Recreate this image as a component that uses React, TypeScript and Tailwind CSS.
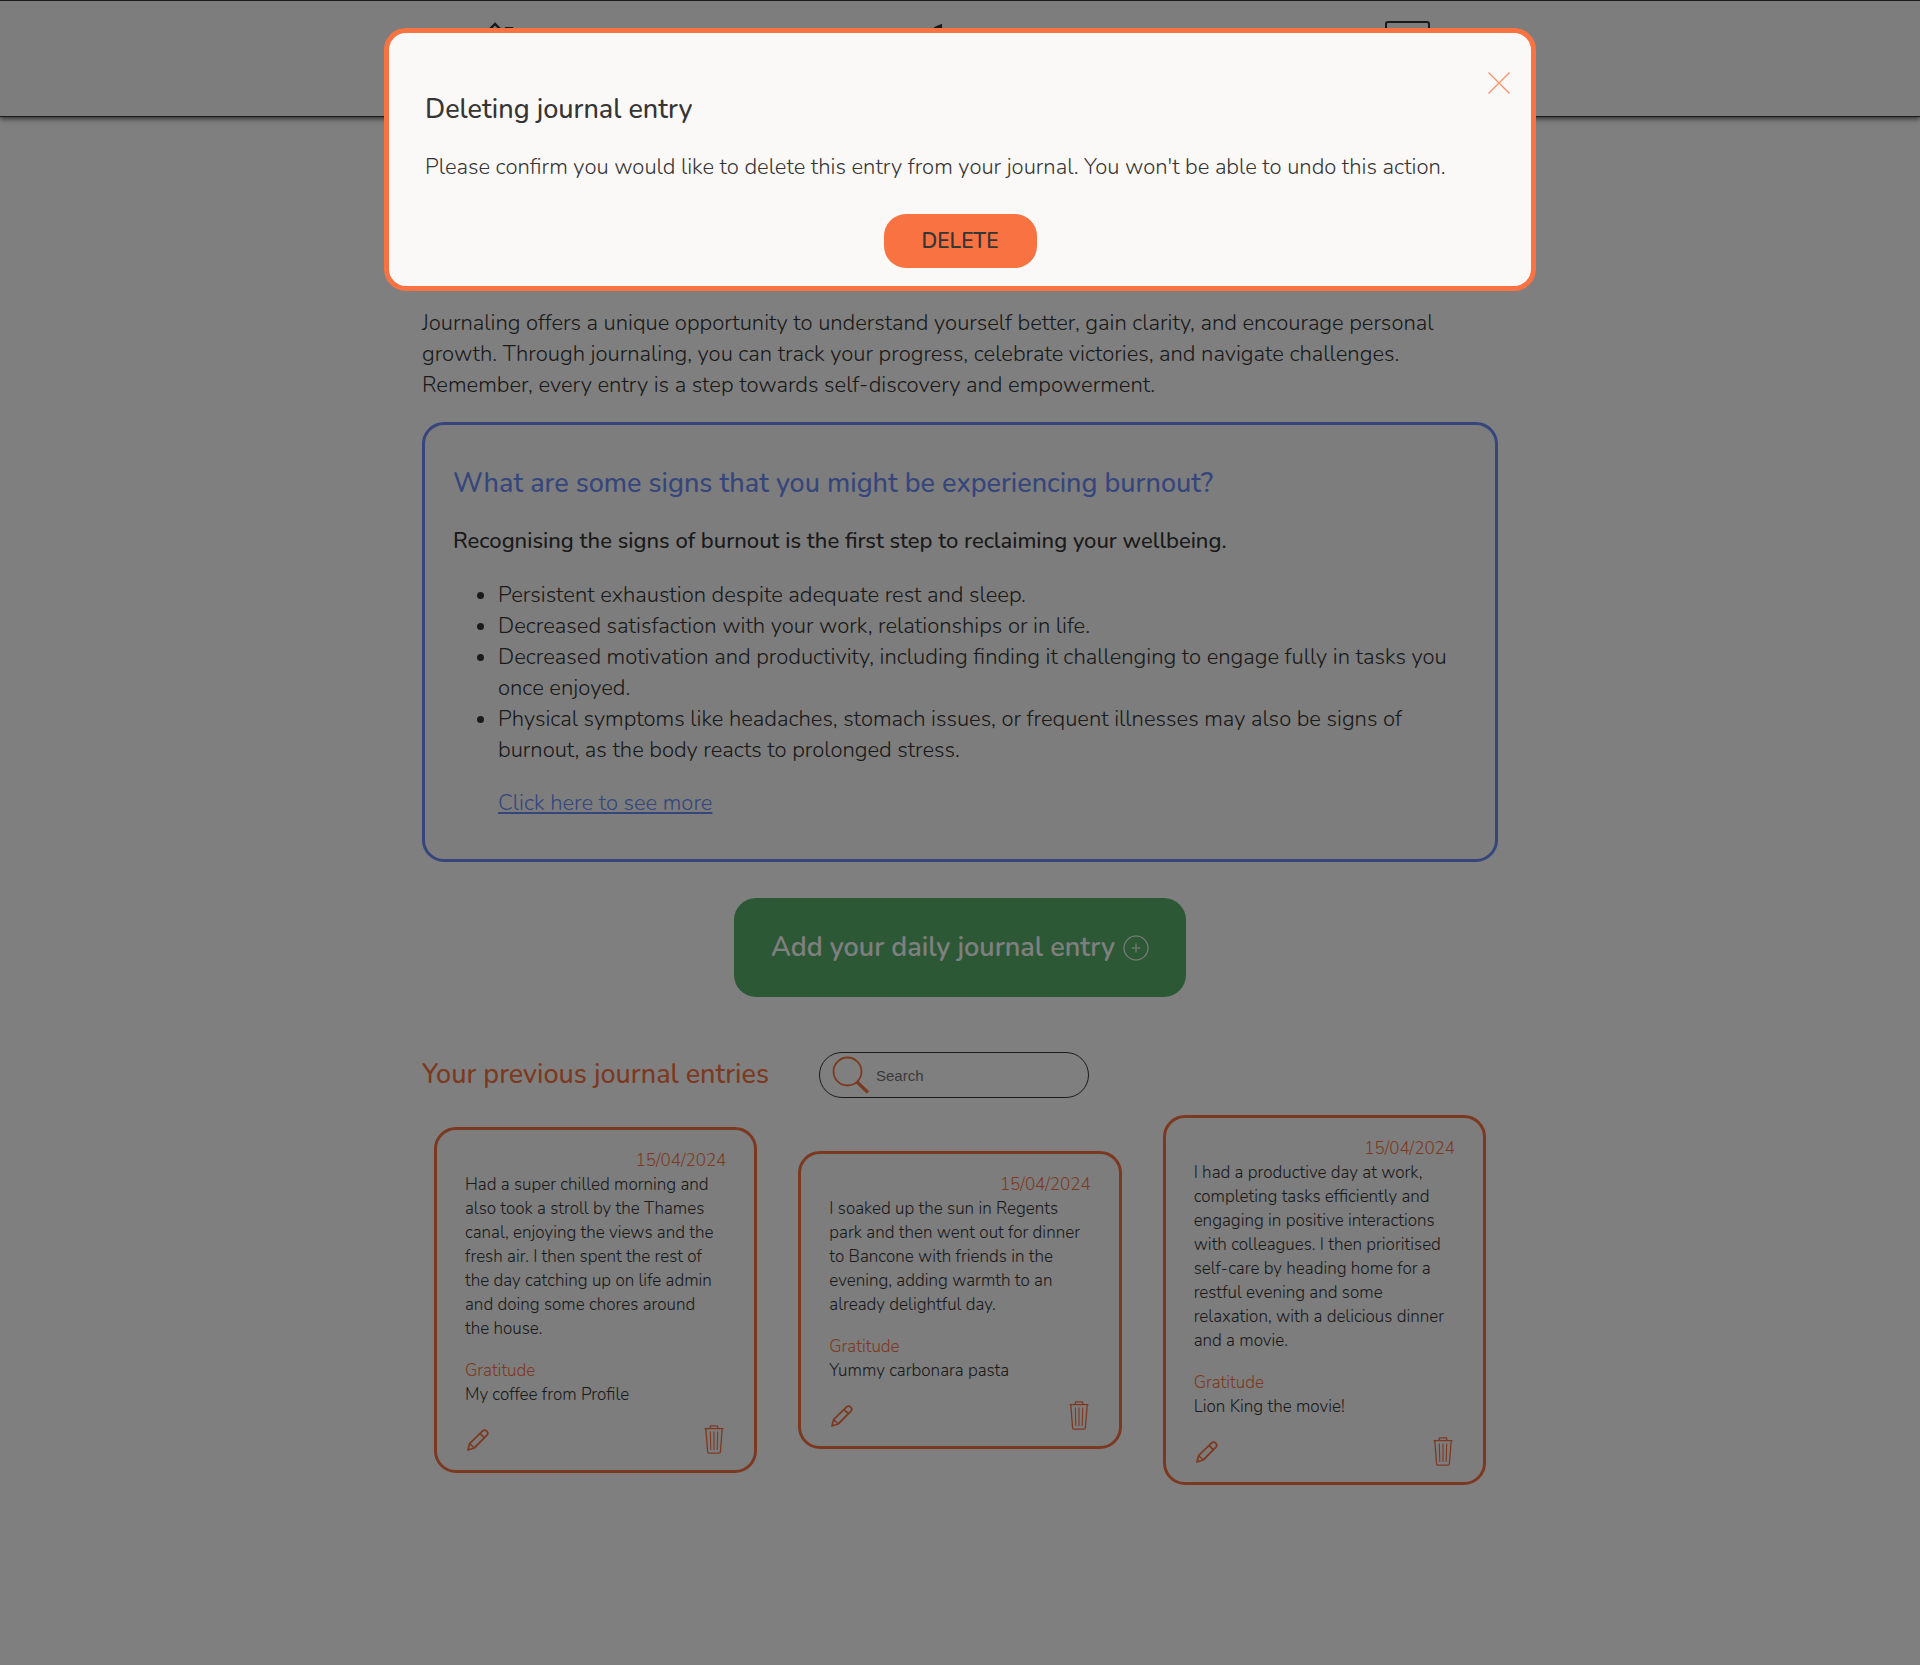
import React from "react";

type Entry = { id: number; date: string; text: string; gratitude: string };

const entries: Entry[] = [
  {
    id: 1,
    date: "15/04/2024",
    text: "Had a super chilled morning and also took a stroll by the Thames canal, enjoying the views and the fresh air. I then spent the rest of the day catching up on life admin and doing some chores around the house.",
    gratitude: "My coffee from Profile",
  },
  {
    id: 2,
    date: "15/04/2024",
    text: "I soaked up the sun in Regents park and then went out for dinner to Bancone with friends in the evening, adding warmth to an already delightful day.",
    gratitude: "Yummy carbonara pasta",
  },
  {
    id: 3,
    date: "15/04/2024",
    text: "I had a productive day at work, completing tasks efficiently and engaging in positive interactions with colleagues. I then prioritised self-care by heading home for a restful evening and some relaxation, with a delicious dinner and a movie.",
    gratitude: "Lion King the movie!",
  },
];

const signs = [
  "Persistent exhaustion despite adequate rest and sleep.",
  "Decreased satisfaction with your work, relationships or in life.",
  "Decreased motivation and productivity, including finding it challenging to engage fully in tasks you once enjoyed.",
  "Physical symptoms like headaches, stomach issues, or frequent illnesses may also be signs of burnout, as the body reacts to prolonged stress.",
];

function HomeIcon() {
  return (
    <svg viewBox="0 0 50 50" className="size-[50px]" fill="none" stroke="currentColor" strokeWidth="2.4">
      <path d="M3 26 L24 5 L45 26" />
      <path d="M9 21 V46 H39 V21" />
      <path d="M35 15 V9.2 H41 V21" />
    </svg>
  );
}

function QuillIcon() {
  return (
    <svg viewBox="0 0 50 50" className="size-[50px]" fill="currentColor">
      <path d="M15 5 C10 6 5 9 2 14 V44 H5 V28 C11 22 16 13 15 5 Z" />
    </svg>
  );
}

function BoardIcon() {
  return (
    <svg viewBox="0 0 50 50" className="size-[50px]" fill="none" stroke="currentColor" strokeWidth="2">
      <rect x="3" y="3" width="43" height="42" rx="2" />
      <path d="M3 14 H46" />
    </svg>
  );
}

function PencilIcon() {
  return (
    <svg viewBox="0 0 22 22" className="size-[22px]" fill="none" stroke="currentColor" strokeWidth="1.8" strokeLinejoin="round">
      <path d="M1 21 L2.6 14.6 L15.4 2.2 A2.9 2.9 0 0 1 19.8 6.4 L7.2 19 Z" />
      <path d="M13.2 4.6 L17.4 8.8" />
      <path d="M2.8 14.8 L7 18.8" strokeWidth="1.5" />
    </svg>
  );
}

function TrashIcon() {
  return (
    <svg viewBox="0 0 20 29" className="h-[29px] w-5" fill="none" stroke="currentColor" strokeWidth="1.3" strokeLinejoin="round">
      <path d="M0.5 3.6 H19.5" />
      <path d="M6.3 3.4 V1.6 Q6.3 0.8 7.1 0.8 H12.9 Q13.7 0.8 13.7 1.6 V3.4" />
      <path d="M1.8 3.8 L3.6 26.8 Q3.7 28.2 5 28.2 H15 Q16.3 28.2 16.4 26.8 L18.2 3.8" />
      <path d="M6.3 6.5 L6.8 25 M10 6.5 V25 M13.7 6.5 L13.2 25" strokeWidth="1.1" />
    </svg>
  );
}

function SearchIcon() {
  return (
    <svg viewBox="0 0 38 38" className="size-[38px] shrink-0 text-[#f97342]" fill="none" stroke="currentColor">
      <circle cx="15.5" cy="15.5" r="14" strokeWidth="1.8" />
      <path d="M25 26 L36 36.5" strokeWidth="3.2" />
    </svg>
  );
}

function PlusCircleIcon() {
  return (
    <svg viewBox="0 0 26 26" className="size-[26px]" fill="none" stroke="currentColor" strokeWidth="1.1" aria-hidden="true">
      <circle cx="13" cy="13" r="12" />
      <path d="M13 8.5 V17.5 M8.5 13 H17.5" />
    </svg>
  );
}

function EntryCard({ entry }: { entry: Entry }) {
  return (
    <article className="rounded-[22px] border-[3px] border-[#f97342] bg-[#fafafa] px-7 pt-[19px] pb-4 text-[17px] leading-6">
      <p className="text-right text-[#f97342]">{entry.date}</p>
      <p className="pr-1.5">{entry.text}</p>
      <h4 className="mt-[18px] text-[#f97342]">Gratitude</h4>
      <p>{entry.gratitude}</p>
      <div className="mt-[18px] flex items-center justify-between px-0.5 text-[#f97342]">
        <button type="button" aria-label="Edit entry">
          <PencilIcon />
        </button>
        <button type="button" aria-label="Delete entry">
          <TrashIcon />
        </button>
      </div>
    </article>
  );
}

export default function App() {
  return (
    <div className="min-h-screen bg-white font-['Nunito','Open_Sans',sans-serif] text-[22px] leading-[31px] font-light text-[#353535]">
      <header className="h-[117px] border-t border-b border-[#353535] bg-[#fafafa] shadow-[0_2px_5px_rgba(0,0,0,0.6)]">
        <nav className="mx-auto flex max-w-[978px] justify-between pt-[18px] pr-4">
          <a href="#home" aria-label="Home">
            <HomeIcon />
          </a>
          <a href="#journal" aria-label="Journal">
            <QuillIcon />
          </a>
          <a href="#board" aria-label="Board">
            <BoardIcon />
          </a>
        </nav>
      </header>

      <main className="mx-auto max-w-[1076px] pt-[191px] pb-10">
        <p>
          Journaling offers a unique opportunity to understand yourself better, gain clarity, and encourage personal
          growth. Through journaling, you can track your progress, celebrate victories, and navigate challenges.
          Remember, every entry is a step towards self-discovery and empowerment.
        </p>

        <section className="mt-[21px] rounded-[22px] border-[3px] border-[#6c8cf8] bg-[#fafafa] px-7 pt-10 pb-10">
          <h2 className="text-[27px] leading-[38px] font-medium text-[#6c8cf8]">
            What are some signs that you might be experiencing burnout?
          </h2>
          <p className="mt-[23px] font-medium">
            Recognising the signs of burnout is the first step to reclaiming your wellbeing.
          </p>
          <ul className="mt-[23px] list-disc pl-[45px]">
            {signs.map((sign) => (
              <li key={sign}>{sign}</li>
            ))}
          </ul>
          <p className="mt-[22px] pl-[45px]">
            <a href="#more" className="text-[#6c8cf8] underline">
              Click here to see more
            </a>
          </p>
        </section>

        <button
          type="button"
          className="mx-auto mt-9 flex h-[99px] items-center gap-2 rounded-[22px] bg-[#58b06c] px-[37px] text-[27px] font-semibold text-white"
        >
          Add your daily journal entry
          <PlusCircleIcon />
        </button>

        <div className="mt-[55px] flex items-center gap-[50px]">
          <h2 className="text-[27px] leading-[38px] font-medium text-[#f97342]">Your previous journal entries</h2>
          <label className="flex h-[46px] w-[270px] items-center rounded-[23px] border border-[#353535] bg-white px-3">
            <SearchIcon />
            <input
              type="search"
              aria-label="Search"
              placeholder="Search"
              className="w-full min-w-0 pl-1.5 font-['Liberation_Sans',sans-serif] text-[15px] font-normal outline-none placeholder:text-[#757575]"
            />
          </label>
        </div>

        <div className="mt-[17px] grid grid-cols-1 items-center gap-[41px] px-3 md:grid-cols-3">
          {entries.map((entry) => (
            <EntryCard key={entry.id} entry={entry} />
          ))}
        </div>
      </main>

      <div className="fixed inset-0 flex items-start justify-center bg-black/50 pt-7">
        <div
          role="dialog"
          aria-modal="true"
          aria-labelledby="dialog-title"
          className="relative w-full max-w-[1152px] rounded-[22px] border-[5px] border-[#f97342] bg-[#fbf9f8] px-9 pt-[58px] pb-[18px]"
        >
          <button type="button" aria-label="Close" className="absolute top-[38px] right-5 text-[#f97342]/80">
            <svg viewBox="0 0 24 24" className="size-6" fill="none" stroke="currentColor" strokeWidth="1.2">
              <path d="M1.5 1.5 L22.5 22.5 M22.5 1.5 L1.5 22.5" />
            </svg>
          </button>
          <h2 id="dialog-title" className="text-[27px] leading-[38px] font-medium">
            Deleting journal entry
          </h2>
          <p className="mt-[23px]">
            Please confirm you would like to delete this entry from your journal. You won't be able to undo this action.
          </p>
          <button
            type="button"
            className="mx-auto mt-[31px] block h-[54px] w-[153px] rounded-[22px] bg-[#f97342] text-[21px] font-semibold"
          >
            DELETE
          </button>
        </div>
      </div>
    </div>
  );
}
